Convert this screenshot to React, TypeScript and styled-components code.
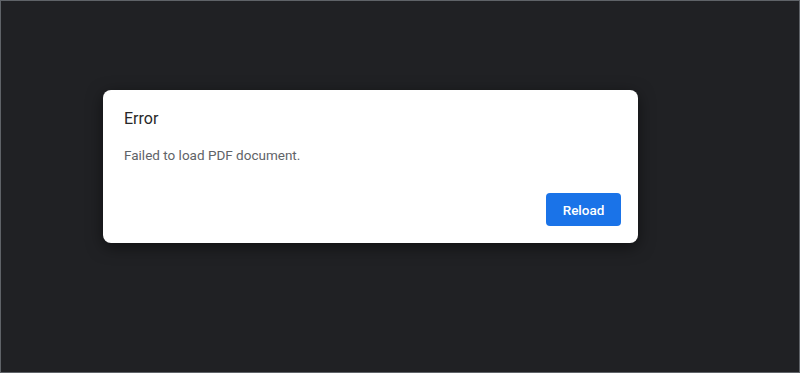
import React from 'react';
import styled, { createGlobalStyle } from 'styled-components';

const GlobalStyle = createGlobalStyle`
    html, body {
        margin: 0;
        padding: 0;
        background: #202124;
    }
    body {
        font-family: Roboto, "Liberation Sans", Arial, sans-serif;
    }
`;

const Page = styled.div`
    box-sizing: border-box;
    width: 800px;
    height: 373px;
    background: #202124;
    border: 1px solid #5f6368;
    padding: 89px 0 0 102px;
`;

const Dialog = styled.div`
    box-sizing: border-box;
    width: 535px;
    height: 153px;
    background: #ffffff;
    border-radius: 8px;
    box-shadow: 0 4px 16px rgba(0, 0, 0, 0.5);
    padding: 19px 17px 17px 21px;
    display: flex;
    flex-direction: column;
`;

const Title = styled.div`
    font-size: 16px;
    line-height: 20px;
    color: #282828;
`;

const Message = styled.div`
    margin-top: 16px;
    font-size: 13.5px;
    line-height: 20px;
    color: #5f6368;
`;

const Actions = styled.div`
    margin-top: auto;
    display: flex;
    justify-content: flex-end;
`;

const Button = styled.button`
    box-sizing: border-box;
    width: 75px;
    height: 33px;
    border: none;
    border-radius: 4px;
    background: #1a73e8;
    color: #ffffff;
    font-family: Roboto, "Liberation Sans", Arial, sans-serif;
    font-size: 13.5px;
    font-weight: 500;
    cursor: pointer;
`;

const App = () => (
    <>
        <GlobalStyle />
        <Page>
            <Dialog>
                <Title>Error</Title>
                <Message>Failed to load PDF document.</Message>
                <Actions>
                    <Button>Reload</Button>
                </Actions>
            </Dialog>
        </Page>
    </>
);

export default App;
